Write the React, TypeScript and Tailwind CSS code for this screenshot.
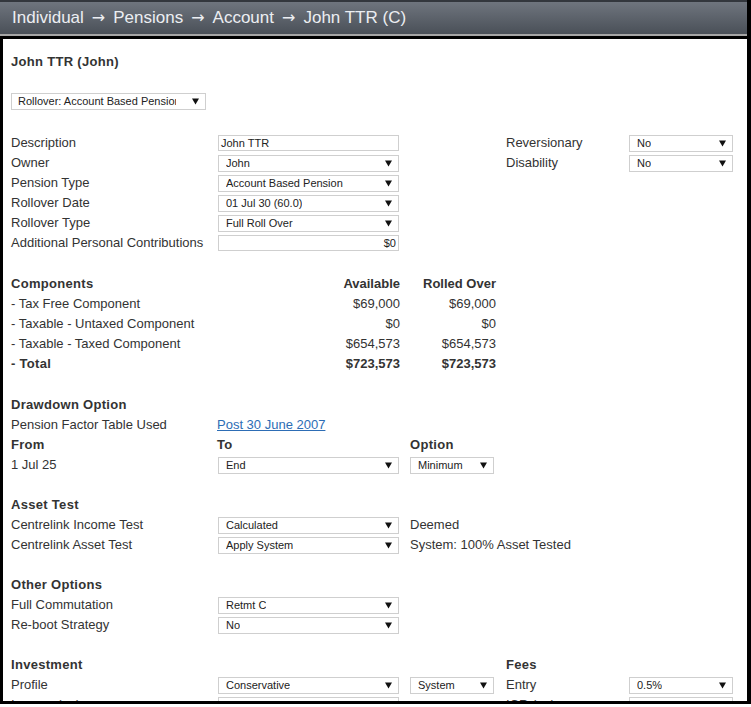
import React from "react";

function Arrow() {
  return (
    <svg width="7" height="7" viewBox="0 0 7 7" className="shrink-0">
      <polygon points="0,0.5 7,0.5 3.5,6.5" fill="#111" />
    </svg>
  );
}

function Select({
  value,
  width,
  pl = "pl-[7px]",
  clip = "",
}: {
  value: string;
  width: string;
  pl?: string;
  clip?: string;
}) {
  return (
    <div
      className={`flex h-[17px] items-center justify-between overflow-hidden border border-[#cfcfcf] bg-white pr-[6px] text-[11px] tracking-normal text-[#222] ${pl} ${width}`}
    >
      <span className={`overflow-hidden whitespace-nowrap ${clip}`}>{value}</span>
      <Arrow />
    </div>
  );
}

function TextBox({ value, right }: { value: string; right?: boolean }) {
  return (
    <div
      className={`flex h-[16px] w-[181px] items-center border border-[#cfcfcf] bg-white px-[2px] text-[11px] text-[#222] ${
        right ? "justify-end" : ""
      }`}
    >
      {value}
    </div>
  );
}

function Row({ children }: { children: React.ReactNode }) {
  return <div className="flex h-5 items-center">{children}</div>;
}

function Label({ children, bold }: { children: React.ReactNode; bold?: boolean }) {
  return (
    <div
      className={`w-[207px] shrink-0 whitespace-nowrap ${
        bold ? "font-bold tracking-[0.3px]" : ""
      }`}
    >
      {children}
    </div>
  );
}

function Heading({ children }: { children: React.ReactNode }) {
  return (
    <Row>
      <div className="font-bold tracking-[0.3px]">{children}</div>
    </Row>
  );
}

function Sep() {
  return <span className="mx-[8px] font-['DejaVu_Sans',sans-serif] text-[16px]">→</span>;
}

export default function App() {
  return (
    <div className="h-[707px] w-[751px] bg-white font-['Liberation_Sans',Arial,sans-serif]">
      <div className="h-[704px] w-[751px] overflow-hidden border-r-4 border-black">
        {/* title bar */}
        <div className="flex h-[34px] items-center whitespace-nowrap border-t-2 border-[#33373d] bg-gradient-to-b from-[#6f757e] to-[#4a5058] pl-[12px] text-[17px] text-[#eceef2]">
          Individual<Sep />Pensions<Sep />Account<Sep />John TTR (C)
        </div>
        <div className="h-[2px] bg-[#a6a6a6]" />
        <div className="h-[3px] bg-black" />

        <div className="h-[665px] overflow-hidden border-b-[3px] border-l-[3px] border-black pl-[8px] text-[13px] text-[#333]">
          <div className="mt-[13px] flex h-5 items-center font-bold tracking-[0.3px]">
            John TTR (John)
          </div>
          <div className="mt-[21px]">
            <Select
              value="Rollover: Account Based Pension"
              width="w-[195px]"
              pl="pl-[6px]"
              clip="block w-[158px] shrink-0"
            />
          </div>

          {/* details */}
          <div className="mt-[23px]">
            <Row>
              <Label>Description</Label>
              <TextBox value="John TTR" />
              <div className="ml-[107px] w-[123px]">Reversionary</div>
              <Select value="No" width="w-[104px]" />
            </Row>
            <Row>
              <Label>Owner</Label>
              <Select value="John" width="w-[181px]" />
              <div className="ml-[107px] w-[123px]">Disability</div>
              <Select value="No" width="w-[104px]" />
            </Row>
            <Row>
              <Label>Pension Type</Label>
              <Select value="Account Based Pension" width="w-[181px]" />
            </Row>
            <Row>
              <Label>Rollover Date</Label>
              <Select value="01 Jul 30 (60.0)" width="w-[181px]" />
            </Row>
            <Row>
              <Label>Rollover Type</Label>
              <Select value="Full Roll Over" width="w-[181px]" />
            </Row>
            <Row>
              <Label>Additional Personal Contributions</Label>
              <TextBox value="$0" right />
            </Row>
          </div>

          {/* components */}
          <div className="mt-[21px]">
            {[
              ["Components", "Available", "Rolled Over", true],
              ["- Tax Free Component", "$69,000", "$69,000", false],
              ["- Taxable - Untaxed Component", "$0", "$0", false],
              ["- Taxable - Taxed Component", "$654,573", "$654,573", false],
              ["- Total", "$723,573", "$723,573", true],
            ].map(([label, a, b, bold], i) => (
              <Row key={i}>
                <Label bold={bold as boolean}>{label}</Label>
                <div className={`w-[182px] text-right ${bold ? "font-bold" : ""}`}>{a}</div>
                <div className={`w-[96px] text-right ${bold ? "font-bold" : ""}`}>{b}</div>
              </Row>
            ))}
          </div>

          {/* drawdown */}
          <div className="mt-[21px]">
            <Heading>Drawdown Option</Heading>
            <Row>
              <Label>Pension Factor Table Used</Label>
              <span className="-ml-px text-[#2d6db5] underline">Post 30 June 2007</span>
            </Row>
            <Row>
              <Label bold>From</Label>
              <div className="-ml-px w-[193px] font-bold tracking-[0.3px]">To</div>
              <div className="font-bold tracking-[0.3px]">Option</div>
            </Row>
            <Row>
              <Label>1 Jul 25</Label>
              <Select value="End" width="w-[181px]" />
              <div className="ml-[11px]">
                <Select value="Minimum" width="w-[84px]" />
              </div>
            </Row>
          </div>

          {/* asset test */}
          <div className="mt-[20px]">
            <Heading>Asset Test</Heading>
            <Row>
              <Label>Centrelink Income Test</Label>
              <Select value="Calculated" width="w-[181px]" />
              <div className="ml-[11px]">Deemed</div>
            </Row>
            <Row>
              <Label>Centrelink Asset Test</Label>
              <Select value="Apply System" width="w-[181px]" />
              <div className="ml-[11px]">System: 100% Asset Tested</div>
            </Row>
          </div>

          {/* other options */}
          <div className="mt-[20px]">
            <Heading>Other Options</Heading>
            <Row>
              <Label>Full Commutation</Label>
              <Select value="Retmt C" width="w-[181px]" />
            </Row>
            <Row>
              <Label>Re-boot Strategy</Label>
              <Select value="No" width="w-[181px]" />
            </Row>
          </div>

          {/* investment */}
          <div className="mt-[20px]">
            <Row>
              <Label bold>Investment</Label>
              <div className="ml-[288px] font-bold tracking-[0.3px]">Fees</div>
            </Row>
            <Row>
              <Label>Profile</Label>
              <Select value="Conservative" width="w-[181px]" />
              <div className="ml-[11px]">
                <Select value="System" width="w-[84px]" />
              </div>
              <div className="ml-[12px] w-[123px]">Entry</div>
              <Select value="0.5%" width="w-[104px]" />
            </Row>
            <Row>
              <Label>Income (pa)</Label>
              <TextBox value="1.0%" right />
              <div className="ml-[107px] w-[123px]">ICR (pa)</div>
              <Select value="0.0%" width="w-[104px]" />
            </Row>
          </div>
        </div>
      </div>
    </div>
  );
}
